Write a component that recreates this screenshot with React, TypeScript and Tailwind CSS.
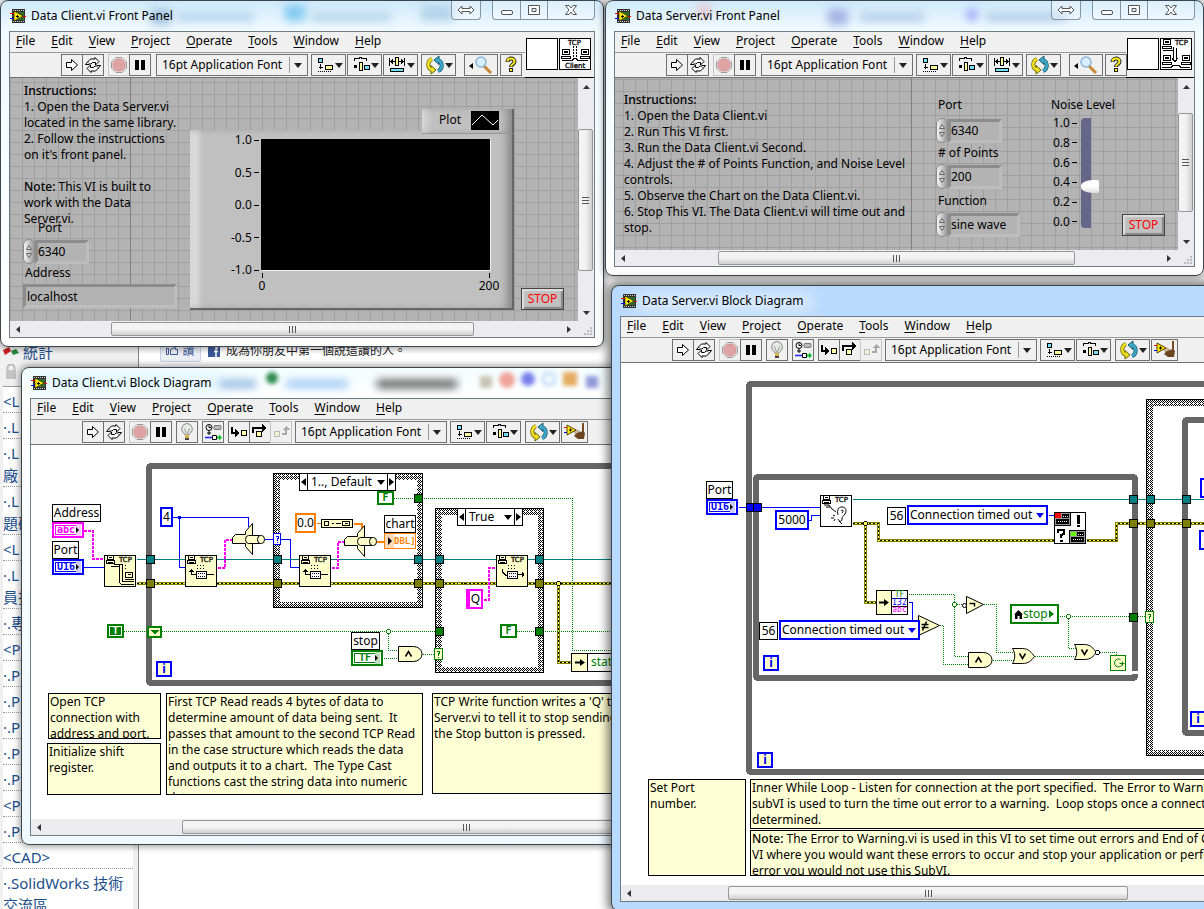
import type { ReactNode } from "react";
import clsx from "clsx";

const MENUS = ["File", "Edit", "View", "Project", "Operate", "Tools", "Window", "Help"];

/* ---------- icons ---------- */

function ViIcon() {
  return (
    <svg width="16" height="14" viewBox="0 0 16 14" shapeRendering="crispEdges">
      <rect x="2" width="13" height="14" fill="#333" />
      <path d="M3 1.500h12M3 12.500h12" stroke="#ccc" strokeDasharray="1 1" />
      <path d="M6 3h8v8H6z" fill="#2f6a2a" />
      <path d="M4 2v10l9-5z" fill="#ffe600" stroke="#000" strokeWidth=".5" shapeRendering="auto" />
      <path d="M0 4.500h4M13 7.500h3" stroke="#e00" />
      <path d="M0 9.500h4" stroke="#00f" />
      <path d="M6 7.500h3M7.500 6v3" stroke="#000" />
    </svg>
  );
}

function RunIcon() {
  return (
    <svg width="20" height="20" viewBox="0 0 20 20">
      <path d="M4.500 7.500h5V4.500l6 5.500-6 5.500v-3h-5z" fill="#fff" stroke="#000" />
    </svg>
  );
}

function RunContinuousIcon() {
  return (
    <svg width="20" height="20" viewBox="0 0 20 20" fill="#fff" stroke="#000">
      <path d="M5 6.500L7.500 4H12V2.500L16 6.500 12.500 10V7.500H9.500L8 9H5z" />
      <path d="M15 13.500L12.500 16H8v1.500L4 13.500 7.500 10v2.500h3L12 11h3z" />
      <path d="M5 6.500L2.500 9.500H6M15 13.500l2.500-3H14" />
    </svg>
  );
}

function AbortIcon() {
  return (
    <svg width="20" height="20" viewBox="0 0 20 20">
      <path d="M7 2.500h6L17.500 7v6L13 17.500H7L2.500 13V7z" fill="#fff" stroke="#999" />
      <path d="M7.500 4h5L16 7.500v5L12.500 16h-5L4 12.500v-5z" fill="#dfa3a3" stroke="#c98f8f" />
    </svg>
  );
}

function PauseIcon() {
  return (
    <svg width="20" height="20" viewBox="0 0 20 20" shapeRendering="crispEdges">
      <path d="M5 5h4v10H5zM11 5h4v10h-4z" />
    </svg>
  );
}

function BulbIcon() {
  return (
    <svg width="20" height="20" viewBox="0 0 20 20">
      <path d="M10 1.500a5.500 5.500 0 0 0-3 10l1 1.500h4l1-1.500a5.500 5.500 0 0 0-3-10z" fill="#e8eae8" stroke="#888" />
      <path d="M7.500 6.500L9.500 12M12.500 6.500l-2 5.500" fill="none" stroke="#999" />
      <path d="M8 13h4v3H8z" fill="#d9b445" />
      <path d="M8 16h4v2H8z" fill="#444" />
    </svg>
  );
}

function RetainIcon() {
  return (
    <svg width="20" height="20" viewBox="0 0 20 20" fill="none">
      <circle cx="6" cy="5.500" r="3" stroke="#000" />
      <path d="M6 3.500v2h2M6 9v4M4 11h4" stroke="#000" />
      <rect x="11" y="3.500" width="7" height="4" rx="1" fill="#bbb" stroke="#777" />
      <path d="M2 15.500h7" stroke="#22f" strokeWidth="1.500" />
      <path d="M9.500 13.500h4v4h-4z" fill="#fff" stroke="#000" />
      <path d="M14 14.500h2v-2l3 3-3 3v-2h-2z" fill="#0b2" />
    </svg>
  );
}

function StepIntoIcon() {
  return (
    <svg width="20" height="20" viewBox="0 0 20 20" shapeRendering="crispEdges">
      <path d="M3 5v6h4" stroke="#000" strokeWidth="2" fill="none" />
      <path d="M6 7l5 4-5 4z" />
      <path d="M12.500 8.500h5v5h-5z" fill="#ffffa8" stroke="#000" />
    </svg>
  );
}

function StepOverIcon() {
  return (
    <svg width="20" height="20" viewBox="0 0 20 20" shapeRendering="crispEdges">
      <path d="M3 11V6h10" stroke="#000" strokeWidth="2" fill="none" />
      <path d="M12 2l5 4-5 4z" />
      <path d="M6.500 9.500h5v5h-5z" fill="#ffffa8" stroke="#000" />
    </svg>
  );
}

function StepOutIcon() {
  return (
    <svg width="20" height="20" viewBox="0 0 20 20" shapeRendering="crispEdges">
      <path d="M11 12h4V7" stroke="#aaa" strokeWidth="2" fill="none" />
      <path d="M11 8l4-4 4 4z" fill="#aaa" />
      <path d="M3.500 9.500h5v5h-5z" fill="#f2f2d0" stroke="#bbb" />
    </svg>
  );
}

function AlignIcon() {
  return (
    <svg width="20" height="20" viewBox="0 0 20 20" shapeRendering="crispEdges" stroke="#000">
      <path d="M3.500 3.500h4v4h-4z" fill="#6fe3f5" />
      <path d="M10.500 10.500h7v4h-7z" fill="#ffff9c" />
      <path d="M5.500 9v5M3.500 12.500h4" fill="none" />
      <path d="M3 16.500h14" strokeDasharray="1 1" />
    </svg>
  );
}

function DistributeIcon() {
  return (
    <svg width="20" height="20" viewBox="0 0 20 20" shapeRendering="crispEdges" stroke="#000">
      <path d="M3 5.500V3.500h5V2.500h2v1h5v2" fill="none" />
      <path d="M3 10h3v3H3z" fill="#000" stroke="none" />
      <path d="M8.500 7.500h3v8h-3z" fill="#ffff9c" />
      <path d="M13.500 10.500h5v4h-5z" fill="#6fe3f5" />
    </svg>
  );
}

function ResizeIcon() {
  return (
    <svg width="20" height="20" viewBox="0 0 20 20" shapeRendering="crispEdges" stroke="#000">
      <path d="M2.500 3v8M17.500 3v8M3 6.500h14" fill="none" />
      <path d="M3 6.500l3-3v6zM17 6.500l-3-3v6z" fill="#000" stroke="none" />
      <path d="M8.500 2.500h3v8h-3z" fill="#ffff9c" />
      <path d="M3.500 13.500h13v3h-13z" fill="#6fe3f5" />
    </svg>
  );
}

function ReorderIcon() {
  return (
    <svg width="20" height="20" viewBox="0 0 20 20" fill="none">
      <path d="M7 4C2 6 2 13 7 15" stroke="#6a6400" strokeWidth="4" />
      <path d="M6 10.500l5 4.500-5 4z" fill="#f0e020" stroke="#6a6400" />
      <path d="M7 4C2 6 2 13 7 15" stroke="#f0e020" strokeWidth="2.500" />
      <path d="M13 5c5 2 5 9 0 11" stroke="#155a70" strokeWidth="4" />
      <path d="M14 9.500L9 5l5-4z" fill="#3fa9c9" stroke="#155a70" />
      <path d="M13 5c5 2 5 9 0 11" stroke="#3fa9c9" strokeWidth="2.500" />
    </svg>
  );
}

function CleanUpIcon() {
  return (
    <svg width="22" height="20" viewBox="0 0 22 20">
      <path d="M10 8c4-1 6 2 7 4l-5 2z" fill="#c9b99a" stroke="#8a6a40" strokeWidth=".5" />
      <path d="M3 3v10l9-5z" fill="#ffe600" stroke="#554400" />
      <path d="M0 5.500h3" stroke="#e00" />
      <path d="M0 10.500h3" stroke="#00f" />
      <path d="M5 8h3M6.500 6.500v3" stroke="#000" />
      <path d="M19 1v9" stroke="#7a4a1c" strokeWidth="2" />
      <path d="M13 11l6-2 2 2-1 6h-6l-4-3z" fill="#6b4420" />
    </svg>
  );
}

function SearchIcon() {
  return (
    <svg width="26" height="20" viewBox="0 0 26 20">
      <path d="M5 8v6l-4-3z" />
      <path d="M16 11l7 7" stroke="#c98638" strokeWidth="3" />
      <circle cx="13" cy="7" r="5" fill="#d6eeff" stroke="#8db6d8" strokeWidth="1.500" />
    </svg>
  );
}

function HelpIcon() {
  return (
    <svg width="20" height="20" viewBox="0 0 20 20">
      <path d="M6.500 7c0-4.500 7-4.500 7-.5 0 2.500-3.500 3-3.500 5.500" fill="none" stroke="#222" strokeWidth="4" />
      <path d="M8 13h4v4H8z" fill="#222" />
      <path d="M6.500 6.500c0-4 7-4 7 0 0 2.500-3.500 3-3.500 5" fill="none" stroke="#ffee20" strokeWidth="2" />
      <path d="M9 14h2v2H9z" fill="#ffee20" />
    </svg>
  );
}

function DownArrow({ className = "text-black" }: { className?: string }) {
  return (
    <svg width="8" height="5" viewBox="0 0 8 5" className={clsx("pointer-events-none shrink-0", className)}>
      <path d="M0 0h8L4 5z" fill="currentColor" />
    </svg>
  );
}

/* Small terminal used in the panel badges */
function Computer({ x, y }: { x: number; y: number }) {
  return (
    <g transform={`translate(${x} ${y})`}>
      <path d="M.5.5h7v5h-7zM-.5 7.500h9v2h-9z" fill="#fff" stroke="#000" />
      <path d="M2 2h4v2H2z" fill="#000" stroke="none" />
    </g>
  );
}

function TcpIcon({ kind, className }: { kind: "open" | "read" | "write" | "listen"; className: string }) {
  return (
    <svg
      width="32"
      height="32"
      viewBox="0 0 32 32"
      shapeRendering="crispEdges"
      className={clsx("absolute", className)}
      fill="none"
      stroke="#000"
    >
      <rect x=".5" y=".5" width="31" height="31" fill={kind === "listen" ? "#fff" : "#ffffcc"} />
      <path d="M3.500 1v3h6V1M2.500 5.500h8v3h-8zM5 2.500h3M4 7.500h5" />
      <text x="15" y="7" fontSize="7" fill="#000" strokeWidth=".3" className="[font-family:'DejaVu_Sans',sans-serif]">
        TCP
      </text>
      {kind === "open" && (
        <>
          <path d="M7 11.500h8.500v16l2 2H30M10 9.500h8.500v16M18 26.500h12" />
          <path d="M15 10.500h8M15 13h8" strokeDasharray="1 2" />
          <path d="M21.500 17.500h7v5h-7zM20.500 24.500h9M24 19.500h3" />
        </>
      )}
      {kind === "read" && (
        <>
          <path d="M12 10.500h9M12 13h9" strokeDasharray="1 2" />
          <path d="M6.500 20v-6M4 16.500h5M5 15.500h3M6.500 19.500h4" />
          <path d="M11.500 16.500h10v7h-10zM22 19.500h7" fill="#fff" />
          <path d="M13 18.500h8M13 21h8" strokeDasharray="1 1" />
        </>
      )}
      {kind === "write" && (
        <>
          <path d="M12 10.500h9M12 13h9" strokeDasharray="1 2" />
          <path d="M6.500 14v3l3 3h2M22 19.500h6M26.500 17v5M27.500 18v3" />
          <path d="M11.500 16.500h10v7h-10z" fill="#fff" />
          <path d="M13 18.500h8M13 21h8" strokeDasharray="1 1" />
        </>
      )}
      {kind === "listen" && (
        <g shapeRendering="auto">
          <path d="M4 10h5l3 4 4 3M6 12h4" />
          <path d="M18 20c-1-5 0-8 4-8s5 4 3 7-3 2-3 5-3 3-4 0M21 16c2-2 3 0 1 2M19 26l3 3" />
          <path d="M13 20l2 1M11 23l3 0M14 26l1-2" />
        </g>
      )}
    </svg>
  );
}

/* ---------- window chrome ---------- */

function ToolButton({ label, dim, wide, children }: { label: string; dim?: boolean; wide?: boolean; children: ReactNode }) {
  return (
    <button
      aria-label={label}
      className={clsx(
        "-mr-px flex h-[22px] items-center justify-center border",
        dim ? "border-[#c4c4c4]" : "border-[#707070]",
        wide ? "w-[35px]" : "w-[22px]"
      )}
    >
      {children}
      {wide && <DownArrow className="text-[#222]" />}
    </button>
  );
}

function Toolbar({ diagram }: { diagram?: boolean }) {
  return (
    <div className="flex h-[25px] items-center border-b border-[#707070] pl-[51px]">
      <ToolButton label="Run"><RunIcon /></ToolButton>
      <ToolButton label="Run Continuously"><RunContinuousIcon /></ToolButton>
      <div className="ml-[5px] flex">
        <ToolButton label="Abort Execution" dim><AbortIcon /></ToolButton>
        <ToolButton label="Pause"><PauseIcon /></ToolButton>
      </div>
      {diagram && (
        <>
          <div className="ml-[5px] flex">
            <ToolButton label="Highlight Execution"><BulbIcon /></ToolButton>
          </div>
          <div className="ml-[5px] flex">
            <ToolButton label="Retain Wire Values"><RetainIcon /></ToolButton>
          </div>
          <div className="ml-[5px] flex">
            <ToolButton label="Step Into"><StepIntoIcon /></ToolButton>
            <ToolButton label="Step Over"><StepOverIcon /></ToolButton>
            <ToolButton label="Step Out" dim><StepOutIcon /></ToolButton>
          </div>
        </>
      )}
      <div className={clsx("flex h-[22px] w-[152px] items-center border border-[#707070] pl-[5px]", diagram ? "ml-[4px]" : "ml-[6px]")}>
        <select aria-label="Font" className="w-[127px] appearance-none truncate bg-transparent">
          <option>16pt Application Font</option>
        </select>
        <span className="mr-1 h-4 w-px bg-[#999]" />
        <DownArrow className="text-[#222]" />
      </div>
      <div className="ml-[3px] flex gap-[2px]">
        <ToolButton label="Align Objects" wide><AlignIcon /></ToolButton>
        <ToolButton label="Distribute Objects" wide><DistributeIcon /></ToolButton>
        {!diagram && <ToolButton label="Resize Objects" wide><ResizeIcon /></ToolButton>}
      </div>
      <div className={clsx("flex gap-[2px]", diagram ? "ml-[5px]" : "ml-[4px]")}>
        <ToolButton label="Reorder" wide><ReorderIcon /></ToolButton>
        {diagram && (
          <button aria-label="Clean Up Diagram" className="flex h-[22px] w-[27px] items-center justify-center border border-[#707070]">
            <CleanUpIcon />
          </button>
        )}
      </div>
      {!diagram && (
        <div className="ml-[9px] flex gap-[2px]">
          <button aria-label="Search" className="flex h-[22px] w-[34px] items-center justify-center border border-[#707070]">
            <SearchIcon />
          </button>
          <ToolButton label="Show Context Help"><HelpIcon /></ToolButton>
        </div>
      )}
    </div>
  );
}

function CaptionButtons() {
  return (
    <div className="flex self-start">
      <button aria-label="Move" className="flex h-[19px] w-[30px] items-center justify-center rounded-b border border-t-0 border-[#8594a0] bg-white/30">
        <svg width="18" height="10" viewBox="0 0 18 10">
          <path d="M1 5l4-4v2.500h8V1l4 4-4 4V6.500H5V9z" fill="#fff" stroke="#555" />
        </svg>
      </button>
      <div className="ml-[11px] flex h-[19px] divide-x divide-[#8594a0] rounded-b border border-t-0 border-[#8594a0] bg-white/30">
        <button aria-label="Minimize" className="flex w-[28px] items-center justify-center">
          <span className="mt-1 h-[5px] w-3 rounded-xs border border-[#555] bg-white" />
        </button>
        <button aria-label="Maximize" className="flex w-[27px] items-center justify-center">
          <svg width="12" height="10" viewBox="0 0 12 10">
            <path d="M.5.5h11v9H.5zM4 3.500h4v3H4z" fill="#fff" fillRule="evenodd" stroke="#555" />
          </svg>
        </button>
        <button aria-label="Close" className="flex w-[46px] items-center justify-center">
          <svg width="12" height="10" viewBox="0 0 12 10">
            <path d="M.5.5h3.500l2 2.500 2-2.500h3.500L8 5l3.500 4.500H8L6 7 4 9.500H.5L4 5z" fill="#fff" stroke="#555" />
          </svg>
        </button>
      </div>
    </div>
  );
}

function HScroll({ thumb }: { thumb: string }) {
  return (
    <div className="flex h-4 shrink-0 bg-[#ececee]">
      <button aria-label="Scroll left" className="flex w-4 items-center justify-center">
        <svg width="4" height="7" viewBox="0 0 4 7"><path d="M4 0v7L0 3.500z" fill="#333" /></svg>
      </button>
      <div className={clsx("my-px flex items-center justify-center gap-[2px] rounded-xs border border-[#979797] bg-linear-to-b from-[#f3f3f3] from-50% to-[#cfcfd1]", thumb)}>
        <span className="h-[7px] w-px bg-[#555]" />
        <span className="h-[7px] w-px bg-[#555]" />
        <span className="h-[7px] w-px bg-[#555]" />
      </div>
      <button aria-label="Scroll right" className="ml-auto flex w-[18px] items-center justify-center">
        <svg width="4" height="7" viewBox="0 0 4 7"><path d="M0 0v7l4-3.500z" fill="#333" /></svg>
      </button>
      <div className="flex w-4 items-end justify-end p-px">
        <svg width="10" height="10" viewBox="0 0 10 10">
          <path d="M7 1h2v2H7zM4 4h2v2H4zM7 4h2v2H7zM1 7h2v2H1zM4 7h2v2H4zM7 7h2v2H7z" fill="#bbb" />
        </svg>
      </div>
    </div>
  );
}

function VScroll({ thumb }: { thumb: string }) {
  return (
    <div className="flex w-4 shrink-0 flex-col bg-[#ececee]">
      <button aria-label="Scroll up" className="flex h-[17px] items-center justify-center">
        <svg width="7" height="4" viewBox="0 0 7 4"><path d="M0 4h7L3.500 0z" fill="#333" /></svg>
      </button>
      <div className={clsx("mr-px flex flex-col items-center justify-center gap-[2px] rounded-xs border border-[#979797] bg-linear-to-r from-[#f3f3f3] from-50% to-[#cfcfd1]", thumb)}>
        <span className="h-px w-[7px] bg-[#555]" />
        <span className="h-px w-[7px] bg-[#555]" />
        <span className="h-px w-[7px] bg-[#555]" />
      </div>
      <button aria-label="Scroll down" className="mt-auto flex h-[17px] items-center justify-center">
        <svg width="7" height="4" viewBox="0 0 7 4"><path d="M0 0h7L3.500 4z" fill="#333" /></svg>
      </button>
    </div>
  );
}

type WindowProps = {
  title: string;
  className: string;
  glass: string;
  diagram?: boolean;
  badge?: ReactNode;
  blur?: ReactNode;
  hThumb: string;
  vThumb: string;
  children: ReactNode;
};

function ViWindow({ title, className, glass, diagram, badge, blur, hThumb, vThumb, children }: WindowProps) {
  return (
    <section className={clsx("absolute flex flex-col rounded-lg border border-[#3c4650] px-2 pb-2", glass, className)}>
      <header className="relative flex h-[30px] shrink-0 items-center">
        <div className="absolute inset-0 overflow-hidden">{blur}</div>
        <div className="relative flex w-full items-center pl-[1px]">
          <ViIcon />
          <h2 className="ml-[5px] flex-1 whitespace-nowrap">{title}</h2>
        </div>
        {!diagram && <div className="relative flex self-start"><CaptionButtons /></div>}
      </header>
      <div className="flex min-h-0 flex-1 flex-col border border-[#6f7b85] bg-[#f0f0f0]">
        <div className="flex shrink-0">
          <div className="flex-1">
            <nav className="flex h-[21px] items-center gap-4 border-b border-[#999] pb-[2px] pl-[6px]">
              {MENUS.map((name) => (
                <button key={name}>
                  <span className="underline underline-offset-2">{name[0]}</span>
                  {name.slice(1)}
                </button>
              ))}
            </nav>
            <Toolbar diagram={diagram} />
          </div>
          {badge && <div className="flex w-[69px] border-b border-black pt-[6px] pl-px">{badge}</div>}
        </div>
        <div className="flex min-h-0 flex-1">
          {children}
          <VScroll thumb={vThumb} />
        </div>
        <HScroll thumb={hThumb} />
      </div>
    </section>
  );
}

/* ---------- front panel controls ---------- */

function Spinner() {
  return (
    <span className="flex h-[25px] w-3 flex-col items-center justify-center gap-[3px] rounded-full border border-[#8c8c8c] bg-linear-to-r from-[#f4f4f4] to-[#9a9a9a]">
      <svg width="6" height="5" viewBox="0 0 6 5"><path d="M.5 4.500L3 .5l2.500 4z" fill="#ddd" stroke="#666" /></svg>
      <svg width="6" height="5" viewBox="0 0 6 5"><path d="M.5.5L3 4.500 5.500.5z" fill="#ddd" stroke="#666" /></svg>
    </span>
  );
}

type NumericProps = { id: string; label: string; value: string; className: string; width: string; indent?: boolean };

function NumericControl({ id, label, value, className, width, indent }: NumericProps) {
  return (
    <div className={clsx("absolute", className)}>
      <label htmlFor={id} className={clsx("block leading-4", indent ? "pl-[15px]" : "pl-[2px]")}>{label}</label>
      <div className="flex items-center">
        <Spinner />
        <input
          id={id}
          defaultValue={value}
          className={clsx("h-6 border-[3px] border-t-[#8c8c8c] border-r-[#bdbdbd] border-b-[#bdbdbd] border-l-[#8c8c8c] bg-[#b3b3b3]", width)}
        />
      </div>
    </div>
  );
}

function StopButton({ className }: { className: string }) {
  return (
    <button className={clsx("absolute h-[22px] w-[43px] border border-[#444] bg-[#c0c0c0] leading-4 text-[#f00] shadow-[inset_2px_2px_1px_#ddd,inset_-2px_-2px_1px_#888]", className)}>
      STOP
    </button>
  );
}

function ClientPanel() {
  return (
    <div className="relative flex-1 overflow-hidden bg-[#b3b3b3] bg-[linear-gradient(to_right,#a0a0a0_1px,transparent_1px),linear-gradient(#a0a0a0_1px,transparent_1px)] bg-size-[12px_12px] bg-position-[0px_4px]">
      <div className="absolute left-[120px] h-full w-px bg-[#808080]" />
      <p className="absolute top-[5px] left-[14px] whitespace-pre-line">
        <span className="font-medium">Instructions:</span>
        {"\n1. Open the Data Server.vi\nlocated in the same library.\n2. Follow the instructions\non it's front panel.\n\n"}
        <span className="font-medium">Note:</span>
        {" This VI is built to\nwork with the Data\nServer.vi."}
      </p>
      <NumericControl id="client-port" label="Port" value="6340" className="top-[142px] left-[13px] [&>div]:mt-[3px]" width="w-[54px]" indent />
      <div className="absolute top-[187px] left-[13px]">
        <label htmlFor="address" className="block pl-[2px]">Address</label>
        <input
          id="address"
          defaultValue="localhost"
          className="mt-[3px] h-6 w-[154px] border-[3px] border-t-[#8c8c8c] border-r-[#bdbdbd] border-b-[#bdbdbd] border-l-[#8c8c8c] bg-[#b3b3b3] px-px"
        />
      </div>

      <div className="absolute top-[52px] left-[180px] h-[180px] w-[324px] border-r-2 border-b-2 border-[#666] bg-[#c0c0c0] bg-linear-to-r from-[#d8d8d8] from-2% via-[#c0c0c0] via-4% to-[#c0c0c0] shadow-[inset_-8px_0_8px_-3px_#888]">
        <div className="absolute top-[9px] left-[71px] h-[132px] w-[230px] border-r border-b border-[#eee] bg-black" />
        <div className="absolute top-[2px] left-[41px] flex h-[146px] flex-col justify-between text-right">
          {["1.0", "0.5", "0.0", "-0.5", "-1.0"].map((tick) => (
            <span key={tick} className="flex items-center justify-end gap-[2px]">
              {tick}
              <i className="h-px w-[5px] bg-black" />
            </span>
          ))}
        </div>
        <div className="absolute top-[143px] left-[66px] flex w-[244px] justify-between">
          <span className="flex w-3 flex-col items-center"><i className="h-[5px] w-px bg-black" />0</span>
          <span className="flex w-[22px] flex-col items-center"><i className="h-[5px] w-px bg-black" />200</span>
        </div>
      </div>
      <div className="absolute top-[31px] left-[412px] flex h-[25px] w-[92px] items-center justify-end gap-[10px] border-r-2 border-b border-r-[#666] border-b-[#999] bg-[#c0c0c0] bg-linear-to-r from-[#d8d8d8] to-[#c0c0c0] to-12% pr-[13px] pb-[2px] shadow-[inset_-8px_0_8px_-3px_#888]">
        Plot
        <svg width="28" height="19" viewBox="0 0 28 19">
          <rect width="28" height="19" />
          <path d="M1 14L11 4l11 10 5-5" fill="none" stroke="#fff" />
        </svg>
      </div>
      <StopButton className="top-[210px] left-[511px]" />
    </div>
  );
}

function ServerPanel() {
  return (
    <div className="relative flex-1 overflow-hidden bg-[#b3b3b3] bg-[linear-gradient(to_right,#a0a0a0_1px,transparent_1px),linear-gradient(#a0a0a0_1px,transparent_1px)] bg-size-[12px_12px] bg-position-[8px_1px]">
      <div className="absolute left-[296px] h-full w-px bg-[#808080]" />
      <p className="absolute top-[14px] left-[9px] whitespace-pre-line">
        <span className="font-medium">Instructions:</span>
        {"\n1. Open the Data Client.vi\n2. Run This VI first.\n3. Run the Data Client.vi Second.\n4. Adjust the # of Points Function, and Noise Level\ncontrols.\n5. Observe the Chart on the Data Client.vi.\n6. Stop This VI. The Data Client.vi will time out and\nstop."}
      </p>
      <NumericControl id="server-port" label="Port" value="6340" className="top-[19px] left-[321px] [&>div]:mt-[5px]" width="w-[54px]" />
      <NumericControl id="points" label="# of Points" value="200" className="top-[67px] left-[321px] [&>div]:mt-[3px]" width="w-[54px]" />
      <NumericControl id="function" label="Function" value="sine wave" className="top-[115px] left-[321px] [&>div]:mt-[3px]" width="w-[72px]" />
      <div className="absolute top-[19px] left-[436px]">
        <label htmlFor="noise">Noise Level</label>
        <div className="flex gap-[4px]">
          <div className="mt-[2px] flex h-[115px] flex-col justify-between pl-[2px]">
            {["1.0", "0.8", "0.6", "0.4", "0.2", "0.0"].map((tick) => (
              <span key={tick} className="flex items-center gap-[2px]">
                {tick}
                <i className="h-px w-[5px] bg-black" />
              </span>
            ))}
          </div>
          <input
            id="noise"
            type="range"
            min="0"
            max="1"
            step="0.01"
            defaultValue="0.36"
            className="mt-[5px] h-[110px] w-[19px] appearance-none rounded-l bg-[linear-gradient(to_right,#66668a_10px,transparent_10px)] [direction:rtl] [writing-mode:vertical-lr] [&::-webkit-slider-thumb]:h-[13px] [&::-webkit-slider-thumb]:w-[18px] [&::-webkit-slider-thumb]:appearance-none [&::-webkit-slider-thumb]:rounded-[12px_2px_2px_12px/6px_2px_2px_6px] [&::-webkit-slider-thumb]:bg-linear-to-b [&::-webkit-slider-thumb]:from-white [&::-webkit-slider-thumb]:from-50% [&::-webkit-slider-thumb]:to-[#ddd]"
          />
        </div>
      </div>
      <StopButton className="top-[136px] left-[507px]" />
    </div>
  );
}

/* ---------- block diagram parts ---------- */

type WireKind = "num" | "ref" | "bool" | "str" | "dbl" | "err";

function Wire({ kind, d }: { kind: WireKind; d: string }) {
  if (kind === "err") {
    return (
      <>
        <path d={d} stroke="#808000" strokeWidth="3" />
        <path d={d} stroke="#ffff50" />
        <path d={d} stroke="#000" strokeDasharray="2 2" />
      </>
    );
  }
  if (kind === "bool") return <path d={d} stroke="#008000" strokeDasharray="1 1" />;
  if (kind === "str") return <path d={d} stroke="#f0f" strokeWidth="2" strokeDasharray="3 1" />;
  if (kind === "dbl") return <path d={d} stroke="#ff8000" strokeWidth="2" />;
  return <path d={d} stroke={kind === "num" ? "#00f" : "#008080"} />;
}

function Tunnel({ x, y, fill }: { x: number; y: number; fill: string }) {
  return <rect x={x} y={y} width="8" height="8" fill={fill} stroke="#000" />;
}

function CaseFrame({ x, y, width, height }: { x: number; y: number; width: number; height: number }) {
  return (
    <>
      <rect x={x + 3} y={y + 3} width={width - 6} height={height - 6} stroke="url(#check)" strokeWidth="6" />
      <rect x={x} y={y} width={width} height={height} stroke="#000" />
    </>
  );
}

function LoopFrame({ x, y, width, height }: { x: number; y: number; width: number; height: number }) {
  return <rect x={x + 3} y={y + 3} width={width - 6} height={height - 6} rx="2" stroke="#666" strokeWidth="6" />;
}

/* Crossed diagonals, used for the case structure border */
function CheckPattern() {
  return (
    <defs>
      <pattern id="check" width="4" height="4" patternUnits="userSpaceOnUse" patternTransform="translate(.5 .5)">
        <rect width="4" height="4" fill="#fff" />
        <path d="M0 0h1v1H0zM1 1h1v1H1zM3 1h1v1H3zM2 2h1v1H2zM1 3h1v1H1zM3 3h1v1H3zM2 0h1v1H2z" fill="#000" stroke="none" />
      </pattern>
    </defs>
  );
}

function CaseInput({ x, y }: { x: number; y: number }) {
  return (
    <g>
      <rect x={x} y={y} width="8" height="11" fill="#ffffcc" stroke="#008000" />
      <path d={`M${x + 2} ${y + 3}h3v2h-1v2M${x + 4} ${y + 8}v1`} stroke="#008000" />
    </g>
  );
}

function TypeCast({ x, y }: { x: number; y: number }) {
  return (
    <g transform={`translate(${x} ${y})`} fill="#ffffcc" stroke="#000" shapeRendering="auto">
      <path d="M0 14l3-3h10V8l7-8v31l-7-8v-3H0z" />
      <path d="M16 12h13a3 4 0 0 1 0 8H16a3 4 0 0 1 0-8z" />
      <path d="M28 12a3 4 0 0 0 0 8" />
    </g>
  );
}

function AndGate({ x, y }: { x: number; y: number }) {
  return (
    <g transform={`translate(${x} ${y})`} shapeRendering="auto">
      <path d="M0 0h15a8 7 0 0 1 0 15H0z" fill="#ffffcc" stroke="#000" />
      <path d="M7 10l3-5 3 5" stroke="#000" strokeWidth="1.500" />
    </g>
  );
}

function OrGate({ x, y }: { x: number; y: number }) {
  return (
    <g transform={`translate(${x} ${y})`} shapeRendering="auto">
      <path d="M0 0h10c6 0 9 4 12 8-3 4-6 7-12 7H0c3-5 3-10 0-15z" fill="#ffffcc" stroke="#000" />
      <path d="M7 5l3 5 3-5" stroke="#000" strokeWidth="1.500" />
    </g>
  );
}

function Label({ className, children }: { className: string; children: ReactNode }) {
  return <span className={clsx("absolute flex h-[18px] items-center justify-center border border-black bg-white", className)}>{children}</span>;
}

/* Control terminal: double border, data type and output arrow */
function Terminal({ className, tint, children }: { className: string; tint: string; children: ReactNode }) {
  return (
    <span className={clsx("absolute flex h-4 w-8 items-center border-2 border-current bg-white p-px", className)}>
      <b className="flex h-[10px] flex-1 items-center justify-center border border-r-0 border-current text-[10px] leading-none [font-family:'DejaVu_Sans_Mono',monospace]">
        {children}
      </b>
      <span className={clsx("flex h-3 w-[5px] shrink-0 items-center", tint)}>
        <svg width="3" height="6" viewBox="0 0 3 6"><path d="M0 0v6l3-3z" /></svg>
      </span>
    </span>
  );
}

function BoolConst({ value, className, solid }: { value: string; className: string; solid?: boolean }) {
  return (
    <b
      className={clsx(
        "absolute flex h-[14px] w-[17px] items-center justify-center border-2 border-[#008000] text-[10px] leading-none [font-family:'DejaVu_Sans_Mono',monospace]",
        solid ? "bg-[#008000] text-white outline-1 -outline-offset-3 outline-white" : "bg-white text-[#008000]",
        className
      )}
    >
      {value}
    </b>
  );
}

function Constant({ className, children }: { className: string; children: ReactNode }) {
  return <span className={clsx("absolute flex items-center justify-center border-2 bg-white", className)}>{children}</span>;
}

function Iteration({ className }: { className: string }) {
  return (
    <b className={clsx("absolute flex size-4 items-center justify-center border-2 border-[#00f] bg-[#ffffcc] text-[#00f]", className)}>i</b>
  );
}

function CaseSelector({ value, className }: { value: string; className: string }) {
  return (
    <div className={clsx("absolute flex h-[18px] items-center border border-black bg-white", className)}>
      <button aria-label="Previous case" className="flex h-full w-[8px] items-center justify-center border-r border-black">
        <svg width="5" height="8" viewBox="0 0 5 8"><path d="M5 0v8L0 4z" /></svg>
      </button>
      <select aria-label="Case" className="min-w-0 flex-1 appearance-none pl-[3px]">
        <option>{value}</option>
      </select>
      <DownArrow />
      <button aria-label="Next case" className="ml-[2px] flex h-full w-[8px] items-center justify-center border-l border-black">
        <svg width="5" height="8" viewBox="0 0 5 8"><path d="M0 0v8l5-4z" /></svg>
      </button>
    </div>
  );
}

function ErrorRing({ className }: { className: string }) {
  return (
    <div className={clsx("absolute flex h-[20px] w-[141px] items-center border-2 border-[#00f] bg-white pr-[2px] pl-px", className)}>
      <select aria-label="Error code" className="min-w-0 flex-1 appearance-none">
        <option>Connection timed out</option>
      </select>
      <DownArrow className="text-[#00f]" />
    </div>
  );
}

function Comment({ className, children }: { className: string; children: ReactNode }) {
  return <p className={clsx("absolute overflow-hidden border border-black bg-[#ffffd5] px-px whitespace-pre", className)}>{children}</p>;
}

function ClientDiagram() {
  return (
    <div className="relative flex-1 overflow-hidden bg-white">
      <svg className="absolute inset-0 size-full" fill="none" shapeRendering="crispEdges">
        <CheckPattern />
        <g transform="translate(-31 -445)">
          <LoopFrame x={146} y={463} width={620} height={223} />
        </g>
        <g transform="translate(-30.500 -444.500)">
          <CaseFrame x={273} y={473} width={149} height={134} />
          <CaseFrame x={435} y={508} width={108} height={164} />
          <Wire kind="str" d="M83 530H92V558H104" />
          <Wire kind="num" d="M83 567H104M172 517H248V526M179 517V567H185M264 539H290V567H299" />
          <circle cx="179" cy="517" r="2" fill="#00f" />
          <Wire kind="ref" d="M136 559H700" />
          <Wire kind="err" d="M136 583H700M558 583V662H571" />
          <circle cx="558" cy="583" r="2" fill="#ff5" stroke="#000" />
          <Wire kind="str" d="M217 567H224V539H232" />
          <Wire kind="str" d="M331 567H337V541H344" />
          <Wire kind="str" d="M483 599H488V567H496" />
          <Wire kind="dbl" d="M353 523H361V530M376 541H385" />
          <path d="M316 523H322" stroke="#ff8000" />
          <rect x="321" y="519" width="31" height="8" fill="#ffffcc" stroke="#000" />
          <path d="M324 521h4v4h-4zM342 521h7v4h-7zM331 523h2M335 523h5M344 523h3" stroke="#000" />
          <Wire kind="bool" d="M393 498H572V650H700M123 631H435M388 631V650H398M383 658H398M422 654H435M516 631H700" />
          <circle cx="388" cy="631" r="2" fill="#fff" stroke="#008000" />
          <TypeCast x={232} y={523} />
          <TypeCast x={344} y={525} />
          <AndGate x={398} y={646} />
          <rect x="273" y="533" width="7" height="11" fill="#fff" stroke="#00f" />
          <path d="M275 536h3v2h-1v2M277 541v1" stroke="#00f" />
          <CaseInput x={434} y={648} />
          <Tunnel x={146} y={555} fill="#008080" />
          <Tunnel x={273} y={555} fill="#008080" />
          <Tunnel x={414} y={555} fill="#008080" />
          <Tunnel x={435} y={555} fill="#008080" />
          <Tunnel x={535} y={555} fill="#008080" />
          <Tunnel x={146} y={579} fill="#808000" />
          <Tunnel x={273} y={579} fill="#808000" />
          <Tunnel x={414} y={579} fill="#808000" />
          <Tunnel x={435} y={579} fill="#808000" />
          <Tunnel x={535} y={579} fill="#808000" />
          <Tunnel x={414} y={494} fill="#008000" />
          <Tunnel x={435} y={627} fill="#008000" />
          <Tunnel x={535} y={627} fill="#008000" />
          <rect x="147" y="626" width="13" height="10" fill="#ffffcc" stroke="#008000" strokeWidth="2" />
          <path d="M149 629h10l-5 5z" fill="#008000" />
        </g>
      </svg>
      <Label className="top-[59px] left-[21px] w-[49px]">Address</Label>
      <Terminal className="top-[77px] left-[21px] text-[#f0f]" tint="bg-[#fcf]">abc</Terminal>
      <Label className="top-[96px] left-[21px] w-[27px]">Port</Label>
      <Terminal className="top-[114px] left-[21px] text-[#00f]" tint="bg-[#ccf]">U16</Terminal>
      <TcpIcon kind="open" className="top-[110px] left-[73px]" />
      <TcpIcon kind="read" className="top-[110px] left-[154px]" />
      <TcpIcon kind="read" className="top-[110px] left-[268px]" />
      <TcpIcon kind="write" className="top-[110px] left-[465px]" />
      <Constant className="top-[62px] left-[129px] h-5 w-[13px] border-[#00f]">4</Constant>
      <Constant className="top-[68px] left-[264px] h-5 w-[21px] border-[#ff8000]">0.0</Constant>
      <Label className="top-[70px] left-[353px] w-[32px]">chart</Label>
      <span className="absolute top-[88px] left-[353px] flex h-4 w-8 items-center border border-[#ff8000] bg-white text-[#ff8000]">
        <span className="flex h-full w-[9px] shrink-0 items-center bg-[#ffd9b8] pl-[3px]">
          <svg width="4" height="8" viewBox="0 0 4 8"><path d="M0 0v8l4-4z" /></svg>
        </span>
        <b className="text-[9px] leading-none [font-family:'DejaVu_Sans_Mono',monospace]">DBL]</b>
      </span>
      <BoolConst value="F" className="top-[46px] left-[346px]" />
      <CaseSelector value="1.., Default" className="top-[28px] left-[268px] w-[97px]" />
      <CaseSelector value="True" className="top-[63px] left-[426px] w-[66px]" />
      <Constant className="top-[144px] left-[435px] h-5 w-[17px] border-l-4 border-[#f0f]">Q</Constant>
      <BoolConst value="F" className="top-[179px] left-[469px]" />
      <BoolConst value="T" className="top-[179px] left-[76px]" solid />
      <Label className="top-[187px] left-[320px] w-[29px]">stop</Label>
      <Terminal className="top-[205px] left-[320px] text-[#008000]" tint="bg-[#bdb]">TF</Terminal>
      <div className="absolute top-[208px] left-[540px] flex h-[19px] w-[80px] border border-black bg-white text-[#008000]">
        <span className="flex w-4 items-center justify-center border-r border-black bg-[#ffffcc]">
          <svg width="10" height="7" viewBox="0 0 10 7"><path d="M0 2.500h5V0l5 3.500L5 7V4.500H0z" /></svg>
        </span>
        <span className="pl-[3px]">status</span>
      </div>
      <Iteration className="top-[216px] left-[125px]" />
      <Comment className="top-[248px] left-[17px] h-[46px] w-[113px]">{"Open TCP\nconnection with\naddress and port."}</Comment>
      <Comment className="top-[298px] left-[16px] h-[52px] w-[114px]">{"Initialize shift\nregister."}</Comment>
      <Comment className="top-[248px] left-[135px] h-[102px] w-[257px]">
        {"First TCP Read reads 4 bytes of data to\ndetermine amount of data being sent.  It\npasses that amount to the second TCP Read\nin the case structure which reads the data\nand outputs it to a chart.  The Type Cast\nfunctions cast the string data into numeric\ndata."}
      </Comment>
      <Comment className="top-[248px] left-[401px] h-[101px] w-[257px]">
        {"TCP Write function writes a 'Q' to the\nServer.vi to tell it to stop sending when\nthe Stop button is pressed."}
      </Comment>
    </div>
  );
}

function ServerDiagram() {
  return (
    <div className="relative flex-1 overflow-hidden bg-white">
      <svg className="absolute inset-0 size-full" fill="none" shapeRendering="crispEdges">
        <g transform="translate(-621 -363)">
          <LoopFrame x={746} y={381} width={700} height={394} />
          <LoopFrame x={753} y={474} width={385} height={207} />
          <path d="M1131 671h7v3h-7z" fill="#fff" />
          <LoopFrame x={1182} y={417} width={400} height={319} />
        </g>
        <g transform="translate(-620.500 -362.500)">
          <CaseFrame x={1146} y={399} width={400} height={356} />
          <Wire kind="num" d="M738 507H820M808 520H811V515H820M1048 515H1054M908 602H912V620" />
          <Wire kind="ref" d="M852 499H1300" />
          <Wire kind="err" d="M852 523H878V540H1054M865 523V602H876M1086 540H1116V523H1300" />
          <circle cx="865" cy="523" r="2" fill="#ff5" stroke="#000" />
          <Wire
            kind="bool"
            d="M908 594H954V656H968M954 604H963M939 625H943V664H968M992 660H1014M983 604H996V652H1013M1034 656H1076M1059 616H1147M1068 616V648H1076M1099 652H1116V655"
          />
          <circle cx="954" cy="604" r="2" fill="#fff" stroke="#008000" />
          <circle cx="1068" cy="616" r="2" fill="#fff" stroke="#008000" />
          <g shapeRendering="auto">
            <path d="M918 615l21 10-21 10z" fill="#ffffcc" stroke="#000" />
            <path d="M921 624h7M921 627h7M926 621l-4 9" stroke="#000" strokeWidth="1.500" />
            <path d="M966 596l17 8-17 9z" fill="#ffffcc" stroke="#000" />
            <path d="M969 603h5v3" stroke="#000" strokeWidth="1.500" />
            <circle cx="964" cy="605" r="2" fill="#fff" stroke="#000" />
          </g>
          <AndGate x={968} y={652} />
          <OrGate x={1012} y={648} />
          <OrGate x={1074} y={644} />
          <circle cx="1097" cy="652" r="2" fill="#fff" stroke="#000" />
          <rect x="1110" y="655" width="15" height="15" fill="#ffffcc" stroke="#008000" />
          <path d="M1120 659a4 4 0 1 0 2 4M1119 663h5M1122 661v4" stroke="#008000" shapeRendering="auto" />
          <CaseInput x={1145} y={611} />
          <Tunnel x={746} y={503} fill="#00f" />
          <Tunnel x={753} y={503} fill="#00f" />
          <Tunnel x={1129} y={495} fill="#008080" />
          <Tunnel x={1146} y={495} fill="#008080" />
          <Tunnel x={1182} y={495} fill="#008080" />
          <Tunnel x={1129} y={519} fill="#808000" />
          <Tunnel x={1146} y={519} fill="#808000" />
          <Tunnel x={1182} y={519} fill="#808000" />
          <Tunnel x={1129} y={613} fill="#008000" />
        </g>
      </svg>
      <Label className="top-[118px] left-[85px] w-[27px]">Port</Label>
      <Terminal className="top-[136px] left-[85px] text-[#00f]" tint="bg-[#ccf]">U16</Terminal>
      <Constant className="top-[147px] left-[154px] h-[20px] w-[34px] border-[#00f]">5000</Constant>
      <TcpIcon kind="listen" className="top-[132px] left-[199px]" />
      <Label className="top-[144px] left-[266px] w-[19px]">56</Label>
      <ErrorRing className="top-[142px] left-[286px]" />
      <svg width="32" height="32" viewBox="0 0 32 32" shapeRendering="crispEdges" className="absolute top-[149px] left-[433px]">
        <rect x=".5" y=".5" width="31" height="31" fill="#fff" stroke="#000" />
        <path d="M.5.5h16v13H.5zM15.500 18.500h16v13h-16z" fill="#999" stroke="#000" />
        <path d="M1 1h6v5H1z" fill="#f00" />
        <path d="M17 20h5v4h-5z" fill="#6f0" />
        <path d="M8 2h7v4H8zM2 7h13v5H2zM23 20h7v4h-7zM17 25h13v5H17z" />
        <path d="M9 4.500h5M4 9.500h9M24 22.500h5M19 27.500h9" stroke="#fff" strokeDasharray="1 1" />
        <path d="M23 3h3v9h-3zM23 13h3v2h-3z" />
        <path d="M4 21v-3h6v4l-3 1v3M6 28.500h3" fill="none" stroke="#000" strokeWidth="2" />
      </svg>
      <div className="absolute top-[227px] left-[255px] flex h-[25px] w-8 border border-black bg-white text-[8px] leading-[8px] [font-family:'DejaVu_Sans_Mono',monospace]">
        <span className="flex flex-1 items-center justify-center border-r border-black bg-[#ffffcc]">
          <svg width="10" height="7" viewBox="0 0 10 7"><path d="M0 2.500h5V0l5 3.500L5 7V4.500H0z" /></svg>
        </span>
        <span className="flex w-[15px] flex-col text-center">
          <span className="h-[7px] text-[#008000]">TF</span>
          <span className="h-[9px] border-y border-black leading-[7px] text-[#00f]">I32</span>
          <span className="h-[7px] leading-[6px] text-[#f0f]">abc</span>
        </span>
      </div>
      <Label className="top-[259px] left-[138px] w-[19px]">56</Label>
      <ErrorRing className="top-[257px] left-[158px]" />
      <span className="absolute top-[241px] left-[389px] flex h-5 w-[49px] items-center border-2 border-[#008000] bg-white px-[2px] text-[#008000]">
        <svg width="9" height="9" viewBox="0 0 9 9" className="shrink-0"><path d="M4.500 0L9 4.500H8V9H5.500V6h-2v3H1V4.500H0z" fill="#000" /></svg>
        stop
        <svg width="5" height="8" viewBox="0 0 5 8" className="ml-px shrink-0"><path d="M0 0v8l5-4z" fill="#008000" /></svg>
      </span>
      <Iteration className="top-[292px] left-[142px]" />
      <Iteration className="top-[389px] left-[136px]" />
      <Iteration className="top-[348px] left-[569px]" />
      <Constant className="top-[115px] left-[579px] h-5 w-5 border-[#00f]">1</Constant>
      <Constant className="top-[167px] left-[578px] h-5 w-5 border-[#00f]">0</Constant>
      <Comment className="top-[416px] left-[27px] h-[97px] w-[98px]">{"Set Port\nnumber."}</Comment>
      <Comment className="top-[416px] left-[129px] h-[50px] w-[600px]">
        {"Inner While Loop - Listen for connection at the port specified.  The Error to Warning\nsubVI is used to turn the time out error to a warning.  Loop stops once a connection is\ndetermined."}
      </Comment>
      <Comment className="top-[467px] left-[129px] h-[46px] w-[600px]">
        <span className="font-medium">Note:</span>
        {" The Error to Warning.vi is used in this VI to set time out errors and End of Connection\nVI where you would want these errors to occur and stop your application or perform\nerror you would not use this SubVI."}
      </Comment>
    </div>
  );
}

/* ---------- forum page behind the windows ---------- */

const BOARDS = ["<L", "·.L", "·.L\n廠", "·.L\n題研", "<L", "·.L\n員批", "·.專", "<P", "·.P", "·.P", "·.P", "·.P", "·.P", "<P", "·.P", "<CAD>", "·.SolidWorks 技術\n交流區"];

function ForumPage() {
  return (
    <div className="flex h-full bg-white pt-[340px]">
      <aside className="w-[139px] shrink-0 border-r border-[#888] bg-[#f0f0f0] pl-[3px]">
        <div className="flex h-[47px] flex-col border-b border-[#999] text-[15px] leading-6 text-[#1c4f8c]">
          <a href="#stats" className="flex items-center gap-1">
            <svg width="16" height="12" viewBox="0 0 16 12">
              <path d="M0 4l6-3 2 4-6 4z" fill="#c22" />
              <path d="M8 5l5-2 3 4-6 2z" fill="#2a8a3a" />
            </svg>
            統計
          </a>
          <svg width="12" height="16" viewBox="0 0 12 16" className="ml-[2px] shrink-0">
            <path d="M2.500 7V4a3.500 3.500 0 0 1 7 0v3" fill="none" stroke="#bbb" strokeWidth="2" />
            <rect x="1" y="6" width="10" height="9" fill="#c4c4c4" />
          </svg>
        </div>
        <ul className="w-[130px] bg-white text-[15px] leading-[22px] text-[#1c4f8c]">
          {BOARDS.map((board, i) => (
            <li key={i} className="border-b border-dotted border-[#999] pt-[3px] whitespace-pre">
              <a href="#board">{board}</a>
            </li>
          ))}
        </ul>
      </aside>
      <main className="relative flex-1 pl-[21px]">
        <div className="flex h-[22px] items-center gap-[6px] text-[#222]">
          <button className="flex h-[22px] w-[41px] items-center justify-center gap-1 rounded-xs border border-[#cad4e7] bg-[#eceef5] text-[#3b5998]">
            <svg width="12" height="9" viewBox="0 0 12 9"><path d="M.5 1.500h2v6h-2zM4.500 2.500l5-2v2h2v5h-7z" fill="none" stroke="#3b5998" /></svg>
            讚
          </button>
          <svg width="12" height="12" viewBox="0 0 12 12" className="ml-px">
            <rect width="12" height="12" fill="#3b5998" />
            <path d="M10 3H8v9M6 6.500h4" fill="none" stroke="#fff" strokeWidth="1.500" />
          </svg>
          成為你朋友中第一個說這讚的人。
        </div>
      </main>
    </div>
  );
}

function Badge({ kind }: { kind: "client" | "server" }) {
  return (
    <>
      <span className="size-8 shrink-0 border border-black bg-white" />
      <svg width="33" height="32" viewBox="0 0 33 32" shapeRendering="crispEdges" fill="none" stroke="#000" className="shrink-0">
        <rect x="1.500" y=".5" width="31" height="31" fill="#fff" />
        {kind === "client" ? (
          <>
            <Computer x={4} y={11} />
            <Computer x={23} y={11} />
            <path d="M15.500 8v12M18.500 8v12" strokeDasharray="2 1" />
            <path d="M4 22.500h10l2-2h2l2 2h10" />
          </>
        ) : (
          <>
            <Computer x={4} y={1} />
            <Computer x={4} y={17} />
            <Computer x={23} y={17} />
            <path d="M4 12.500h10M14.500 9v13M17.500 10v12M13 20l3 4 3-4" />
            <path d="M3 29.500h9l2-2h6l2 2h9" />
          </>
        )}
        <g fill="#000" strokeWidth=".3" fontSize="7" className="[font-family:'DejaVu_Sans',sans-serif]">
          <text x={kind === "client" ? 10 : 16} y="7">TCP</text>
          {kind === "client" && <text x="7" y="30">Client</text>}
        </g>
      </svg>
    </>
  );
}

export default function App() {
  return (
    <div className="relative h-screen w-full overflow-hidden text-xs leading-4 text-black [font-family:'Noto_Sans','Noto_Sans_CJK_TC',sans-serif]">
      <ForumPage />
      <ViWindow
        title="Data Client.vi Block Diagram"
        className="top-[367px] left-[21px] h-[478px] w-[780px] shadow-[0_0_6px_2px_rgba(0,0,0,0.35)]"
        glass="bg-[linear-gradient(to_bottom,#f3fdff,#ffffff_30px,#eef9ff)]"
        diagram
        hThumb="ml-[135px] w-[569px]"
        vThumb="mt-[20px] h-[150px]"
        blur={
          <>
            <span className="absolute top-2 left-0 h-4 w-48 bg-[#bdeaff]/50 blur-sm" />
            <span className="absolute top-3 left-[190px] h-2 w-9 bg-[#8fb8e0] blur-xs" />
            <span className="absolute top-1 left-[236px] size-3 rounded-full bg-[#2f8a50] blur-[2px]" />
            <span className="absolute top-3 left-[256px] h-2 w-[62px] bg-[#9cc8f4] blur-xs" />
            <span className="absolute top-3 left-[347px] h-2 w-20 bg-[#555] blur-xs" />
            <span className="absolute top-2 left-[450px] size-3 bg-[#c9c4b4] blur-[2px]" />
            <span className="absolute top-1 left-[469px] size-4 rounded-full bg-[#f0a49a] blur-[2px]" />
            <span className="absolute top-1 left-[491px] size-3.5 rounded-full bg-[#7a80ea] blur-[2px]" />
            <span className="absolute top-1 left-[512px] size-3.5 rounded-full border-2 border-[#a8ccf6] blur-[2px]" />
            <span className="absolute top-1 left-[533px] size-3.5 bg-[#e4aa60] blur-[2px]" />
            <span className="absolute top-2 left-[556px] size-3 bg-[#9098dc] blur-[2px]" />
          </>
        }
      >
        <ClientDiagram />
      </ViWindow>

      <ViWindow
        title="Data Client.vi Front Panel"
        className="top-0 left-0 h-[347px] w-[604px] shadow-[0_0_6px_2px_rgba(0,0,0,0.35)]"
        glass="bg-[linear-gradient(to_bottom,#cfe9fb,#f2fbff_30px,#ffffff)]"
        badge={<Badge kind="client" />}
        hThumb="ml-[85px] w-[363px]"
        vThumb="mt-[34px] h-[142px]"
        blur={
          <>
            <span className="absolute top-2 left-[142px] h-4 w-5 bg-[#8ab0d4]/70 blur-xs" />
            <span className="absolute top-3 left-[168px] h-2 w-[76px] bg-[#9cc4e4]/70 blur-xs" />
            <span className="absolute top-1 left-[276px] h-4 w-5 bg-[#6cc0ee]/80 blur-xs" />
            <span className="absolute top-3 left-[302px] h-2 w-20 bg-[#b4d4ea] blur-xs" />
            <span className="absolute top-1 left-[412px] h-4 w-8 bg-[#b4d4ea] blur-xs" />
          </>
        }
      >
        <ClientPanel />
      </ViWindow>

      <ViWindow
        title="Data Server.vi Front Panel"
        className="top-0 left-[605px] h-[276px] w-[599px] shadow-[0_0_6px_2px_rgba(0,0,0,0.35)]"
        glass="bg-[linear-gradient(to_bottom,#cfe9fb,#f2fbff_30px,#ffffff)]"
        badge={<Badge kind="server" />}
        hThumb="ml-[87px] w-[357px]"
        vThumb="mt-[18px] h-[99px]"
        blur={
          <>
            <span className="absolute top-1 left-[84px] h-3 w-3 bg-[#f0b0b8]/70 blur-xs" />
            <span className="absolute top-2 left-[214px] h-4 w-5 bg-[#8898d8]/70 blur-xs" />
            <span className="absolute top-3 left-[246px] h-2 w-16 bg-[#b0cce8] blur-xs" />
            <span className="absolute top-2 left-[352px] size-3 rounded-full bg-[#8890f8]/80 blur-xs" />
            <span className="absolute top-3 left-[372px] h-2 w-20 bg-[#b0cce8] blur-xs" />
          </>
        }
      >
        <ServerPanel />
      </ViWindow>

      <ViWindow
        title="Data Server.vi Block Diagram"
        className="top-[285px] -right-[180px] left-[611px] h-[626px] shadow-[0_0_10px_4px_rgba(0,0,0,0.5)]"
        glass="bg-[#b9d9fd]"
        diagram
        hThumb="ml-[91px] w-[400px]"
        vThumb="mt-[20px] h-[150px]"
        blur={<span className="absolute top-2 left-4 h-4 w-44 bg-white/60 blur-sm" />}
      >
        <ServerDiagram />
      </ViWindow>
    </div>
  );
}
